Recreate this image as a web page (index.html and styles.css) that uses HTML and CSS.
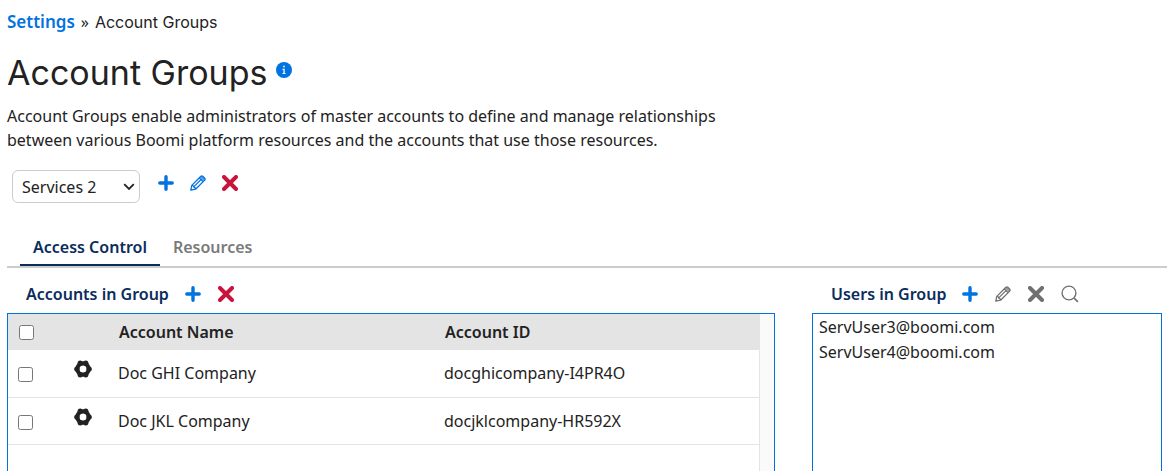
FILE: index.html
```html
<!DOCTYPE html>
<html lang="en">
<head>
    <meta charset="UTF-8">
    <title>Account Groups</title>
    <link rel="stylesheet" href="styles.css">
</head>
<body>
<svg class="sprite">
    <symbol id="plus" viewBox="0 0 16 16">
        <path d="M8 1.8v12.4M1.8 8h12.4" fill="none" stroke="currentColor" stroke-width="3.4" stroke-linecap="round"/>
    </symbol>
    <symbol id="cross" viewBox="0 0 16 16">
        <path d="M2 2l12 12M14 2L2 14" fill="none" stroke="currentColor" stroke-width="4" stroke-linecap="round"/>
    </symbol>
    <symbol id="pencil" viewBox="0 0 16 16">
        <path d="M.8 15.2l1-4.8L10.9 1.3q.9-.8 1.9 0l1.9 1.9q.8 1 0 1.9L5.6 14.2zM1.8 10.4q2 .1 2.1 1.7 1.6.1 1.7 2.1M3.7 11.9l8-8M9.3 2.9l3.8 3.8" fill="none" stroke="currentColor" stroke-width="1.3" stroke-linejoin="round"/>
        <path d="M10 2.2l1.4-1.1h1.2l2.3 2.3v1.2l-1.1 1.4z" fill="currentColor" fill-opacity=".7"/>
    </symbol>
    <symbol id="search" viewBox="0 0 18 18">
        <circle cx="8" cy="8" r="6.9" fill="none" stroke="currentColor" stroke-width="1.4"/>
        <path d="M12.9 12.9l4 4" stroke="currentColor" stroke-width="1.6"/>
    </symbol>
    <symbol id="gear" viewBox="0 0 18 18">
        <circle cx="9" cy="9" r="5.6" fill="none" stroke="currentColor" stroke-width="4.2"/>
        <g fill="currentColor">
            <circle cx="6.2" cy="3.2" r="2.600"/>
            <circle cx="11.8" cy="3.2" r="2.600"/>
            <circle cx="15.2" cy="9" r="2.600"/>
            <circle cx="11.8" cy="14.8" r="2.600"/>
            <circle cx="6.2" cy="14.8" r="2.600"/>
            <circle cx="2.8" cy="9" r="2.600"/>
        </g>
    </symbol>
</svg>

<div class="page">
    <nav class="crumbs"><a href="#">Settings</a> » <span>Account Groups</span></nav>

    <div class="title">
        <h1>Account Groups</h1>
        <button class="info" aria-label="Help">
            <svg viewBox="0 0 16 16">
                <circle cx="8" cy="8" r="8" fill="currentColor"/>
                <path d="M7.2 3.8h1.6v1.5H7.2zM6.4 6.8h2.3v4.4h1v.9H6.3v-.9h1.1V7.7h-1z" fill="#fff"/>
            </svg>
        </button>
    </div>

    <p class="intro">Account Groups enable administrators of master accounts to define and manage relationships between various Boomi platform resources and the accounts that use those resources.</p>

    <div class="picker">
        <div class="dropdown">
            <select aria-label="Account group">
                <option>Services 2</option>
            </select>
            <svg viewBox="0 0 12 8"><path d="M1.200 1.200L6 6l4.800-4.800" fill="none" stroke="currentColor" stroke-width="1.800"/></svg>
        </div>
        <div class="tools">
            <button class="blue" aria-label="Add group"><svg><use href="#plus"/></svg></button>
            <button class="blue" aria-label="Edit group"><svg><use href="#pencil"/></svg></button>
            <button class="red" aria-label="Delete group"><svg><use href="#cross"/></svg></button>
        </div>
    </div>

    <div class="tabs" role="tablist">
        <button class="current" role="tab" aria-selected="true">Access Control</button>
        <button role="tab" aria-selected="false">Resources</button>
    </div>

    <div class="panels">
        <section class="panel">
            <div class="bar">
                <h2>Accounts in Group</h2>
                <div class="tools">
                    <button class="blue" aria-label="Add account"><svg><use href="#plus"/></svg></button>
                    <button class="red" aria-label="Remove account"><svg><use href="#cross"/></svg></button>
                </div>
            </div>
            <div class="accounts">
                <table>
                    <thead>
                    <tr>
                        <th class="check"><input type="checkbox" aria-label="Select all"></th>
                        <th class="action"></th>
                        <th class="name">Account Name</th>
                        <th>Account ID</th>
                    </tr>
                    </thead>
                    <tbody>
                    <tr>
                        <td><input type="checkbox" aria-label="Select Doc GHI Company"></td>
                        <td><button class="gear" aria-label="Actions"><svg><use href="#gear"/></svg></button></td>
                        <td>Doc GHI Company</td>
                        <td>docghicompany-I4PR4O</td>
                    </tr>
                    <tr>
                        <td><input type="checkbox" aria-label="Select Doc JKL Company"></td>
                        <td><button class="gear" aria-label="Actions"><svg><use href="#gear"/></svg></button></td>
                        <td>Doc JKL Company</td>
                        <td>docjklcompany-HR592X</td>
                    </tr>
                    </tbody>
                </table>
            </div>
        </section>

        <section class="panel">
            <div class="bar">
                <h2><label for="users">Users in Group</label></h2>
                <div class="tools">
                    <button class="blue" aria-label="Add user"><svg><use href="#plus"/></svg></button>
                    <button aria-label="Edit user"><svg><use href="#pencil"/></svg></button>
                    <button aria-label="Remove user"><svg><use href="#cross"/></svg></button>
                    <button aria-label="Search users"><svg class="big"><use href="#search"/></svg></button>
                </div>
            </div>
            <select class="users" id="users" size="5">
                <option>ServUser3@boomi.com</option>
                <option>ServUser4@boomi.com</option>
            </select>
        </section>
    </div>
</div>
</body>
</html>
```
FILE: styles.css
```css
* {
    padding: 0;
    margin: 0;
    box-sizing: border-box;
}

body {
    font: 16px/24px "Noto Sans", sans-serif;
    color: #222;
    background: #fff;
}

button {
    border: 0;
    background: none;
    font: inherit;
    color: #707070;
    cursor: pointer;
}

svg {
    display: block;
}

.sprite {
    display: none;
}

.page {
    display: flex;
    flex-direction: column;
    min-height: 100vh;
    padding: 10px 0 0 7px;
}

.crumbs {
    display: flex;
    gap: 6px;
}

.crumbs a {
    color: #0073e0;
    font-size: 17px;
    font-weight: 600;
    text-decoration: none;
}

.crumbs span {
    font-family: Inter, sans-serif;
}

.title {
    display: flex;
    gap: 9px;
    margin-top: 16px;
}

.title h1 {
    font: 400 34px/46px Inter, sans-serif;
}

.info {
    width: 16px;
    height: 16px;
    margin-top: 12px;
    color: #0073e0;
}

.intro {
    max-width: 740px;
    margin-top: 8px;
}

.picker {
    display: flex;
    align-items: flex-start;
    gap: 18px;
    margin: 18px 0 0 5px;
}

.dropdown {
    position: relative;
}

.dropdown select {
    display: block;
    width: 128px;
    height: 33px;
    padding-left: 9px;
    border: 1px solid #ccc;
    border-radius: 6px;
    background: #fff;
    font: inherit;
    color: #222;
    appearance: none;
}

.dropdown svg {
    position: absolute;
    top: 13px;
    right: 5px;
    width: 12px;
    height: 8px;
    pointer-events: none;
}

.tools {
    display: flex;
    gap: 17px;
    align-items: center;
}

.picker .tools {
    gap: 16px;
    padding-top: 5px;
}

.tools svg {
    width: 16px;
    height: 16px;
}

.tools .big {
    width: 18px;
    height: 18px;
}

.tools .blue {
    color: #0073e0;
}

.tools .red {
    color: #c8143c;
}

.tabs {
    display: flex;
    margin-top: 28px;
    padding-left: 13px;
    border-bottom: 2px solid #ccc;
}

.tabs button {
    height: 35px;
    padding: 0 13px 2px;
    border-bottom: 2px solid transparent;
    font-weight: 600;
    color: #7a7a7a;
}

.tabs .current {
    border-color: #0a2d5c;
    color: #0a2d5c;
}

.panels {
    display: grid;
    grid-template-columns: 1fr 350px;
    gap: 37px;
    flex: 1;
    padding-right: 5px;
}

.panel {
    display: flex;
    flex-direction: column;
}

.bar {
    display: flex;
    align-items: center;
    gap: 16px;
    height: 45px;
    padding: 6px 0 0 19px;
}

.bar h2 {
    font-size: 16px;
    font-weight: 600;
    color: #0a2d5c;
}

/* white list with the scrollbar track down its right side */
.accounts {
    flex: 1;
    padding-right: 15px;
    border: 1px solid #0073e0;
    border-bottom: 0;
    background: linear-gradient(to left, #fafafa 14px, #e4e4e4 14px, #e4e4e4 15px, #fff 15px);
}

.accounts table {
    width: 100%;
    border-collapse: collapse;
    table-layout: fixed;
}

.accounts tbody tr {
    height: 47px;
    border-bottom: 1px solid #e4e4e4;
}

.accounts thead tr {
    height: 36px;
    background: #e4e4e4;
}

.accounts th {
    padding-left: 1px;
    font-weight: 600;
    text-align: left;
}

.accounts td:first-child {
    padding-left: 10px;
}

.accounts th:first-child {
    padding-left: 11px;
}

.accounts .check {
    width: 64px;
}

.accounts .action {
    width: 46px;
}

.accounts .name {
    width: 326px;
}

.accounts input {
    display: block;
    width: 15px;
    height: 15px;
}

.accounts td input {
    margin-top: 3px;
}

.gear {
    display: block;
    margin-bottom: 8px;
    padding-left: 2px;
    color: #222;
}

.gear svg {
    width: 18px;
    height: 18px;
}

.users {
    flex: 1;
    padding: 2px 4px 2px 6px;
    border: 1px solid #0073e0;
    border-bottom: 0;
    border-radius: 0;
    background: #fff;
    font: inherit;
    color: #222;
    outline: 0;
}

.users option {
    min-height: 25px;
    line-height: 25px;
}
```
